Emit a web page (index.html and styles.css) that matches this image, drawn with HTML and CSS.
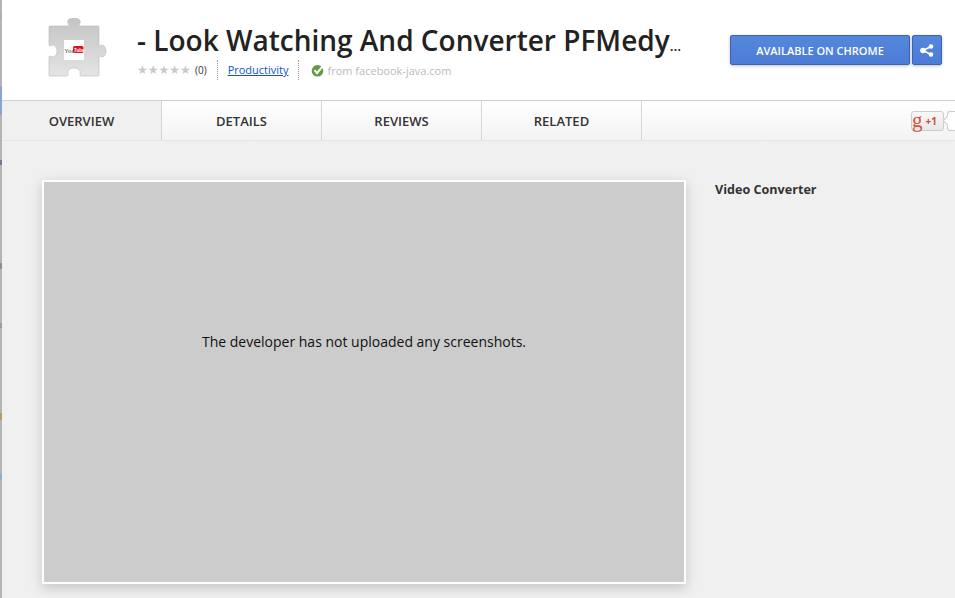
FILE: index.html
```html
<!DOCTYPE html>
<html lang="en">
<head>
    <meta charset="UTF-8">
    <title>Look Watching And Converter PFMedy</title>
    <link rel="stylesheet" href="styles.css">
</head>
<body>
    <div class="edge"></div>
    <div class="page">
        <header class="header">
            <div class="ext-icon">
                <svg width="62" height="60" viewBox="0 0 62 60">
                    <defs>
                        <linearGradient id="puzzle" x1="0" y1="0" x2="0" y2="1">
                            <stop offset="0" stop-color="#c4c4c4"/>
                            <stop offset="1" stop-color="#e4e4e4"/>
                        </linearGradient>
                    </defs>
                    <path d="M4 8 H22 C23 8 23 7 22.5 6 C20 2 24 0 28 0 C32 0 36 2 33.5 6 C33 7 33 8 34 8 H52 Q53 8 53 9 V27 C53 28 54 28 55 27.5 C58 26 60 30 60 33 C60 36 58 40 55 38.5 C54 38 53 38 53 39 V57 Q53 58 52 58 H35 C34 58 34 57 34 56 C35 52 32 50 28 50 C24 50 21 52 22 56 C22 57 22 58 21 58 H4 Q3 58 3 57 V39 C3 38 4 38 5 38.5 C8 40 11 37 11 33 C11 29 8 26 5 27.5 C4 28 3 28 3 27 V9 Q3 8 4 8 Z" fill="url(#puzzle)" stroke="#b8b8b8" stroke-width="0.6"/>
                    <rect x="18" y="22" width="20" height="20" fill="#fff"/>
                    <rect x="27" y="28" width="10.500" height="7" rx="1.500" fill="#d8141c"/>
                    <text x="18.500" y="34.500" class="yt-you">You</text>
                    <text x="28" y="33.500" class="yt-tube">Tube</text>
                </svg>
            </div>
            <div class="info">
                <h1 class="title">- Look Watching And Converter PFMedy<span class="dots">...</span></h1>
                <div class="meta">
                    <span class="stars">★★★★★</span>
                    <span class="count">(0)</span>
                    <a class="category" href="#">Productivity</a>
                    <span class="source">
                        <svg width="14" height="13" viewBox="0 0 14 13">
                            <circle cx="6.500" cy="6.800" r="5.800" fill="#5f9a45"/>
                            <path d="M3.500 6.200 L6 9.200 L12 1.800" fill="none" stroke="#fff" stroke-width="2"/>
                        </svg>
                        from facebook-java.com
                    </span>
                </div>
            </div>
            <div class="actions">
                <button class="btn btn-install">AVAILABLE ON CHROME</button>
                <button class="btn btn-share" aria-label="Share">
                    <svg width="14" height="13" viewBox="0 0 14 13">
                        <path d="M11 2.500 L3 6.500 L11 10.500" fill="none" stroke="#fff" stroke-width="1.600"/>
                        <circle cx="11" cy="2.500" r="2.300" fill="#fff"/>
                        <circle cx="3" cy="6.500" r="2.800" fill="#fff"/>
                        <circle cx="11" cy="10.500" r="2.300" fill="#fff"/>
                    </svg>
                </button>
            </div>
        </header>

        <nav class="tabs">
            <a class="tab active" href="#">OVERVIEW</a>
            <a class="tab" href="#">DETAILS</a>
            <a class="tab" href="#">REVIEWS</a>
            <a class="tab" href="#">RELATED</a>
            <div class="plus-wrap">
                <div class="plus-one"><span class="g">g</span><span class="plus">+1</span></div>
                <div class="bubble"></div>
            </div>
        </nav>

        <main class="content">
            <div class="shot-box">The developer has not uploaded any screenshots.</div>
            <aside class="side">Video Converter</aside>
        </main>
    </div>
</body>
</html>
```

FILE: styles.css
```css
html, body {
    height: 100%;
}

*, *::before, *::after {
    box-sizing: border-box;
}

body {
    font-family: 'Open Sans', sans-serif;
    margin: 0;
    display: flex;
    width: 955px;
    height: 598px;
    overflow: hidden;
    background-color: #f0f0f0;
    color: #222;
}

a {
    color: inherit;
    text-decoration: none;
}

/* sliver of the window behind */
.edge {
    width: 2px;
    flex-shrink: 0;
    background: linear-gradient(#b4b4b4 0, #b4b4b4 10px, #9fb6c6 11px, #c4a98e 18px, #b4b4b4 20px,
        #b4b4b4 86px, #8aa5d0 86px, #8aa5d0 115px, #b4b4b4 115px,
        #b4b4b4 160px, #6c7a92 160px, #6c7a92 165px, #b4b4b4 165px,
        #b4b4b4 263px, #8b8b9a 263px, #8b8b9a 269px, #b4b4b4 269px,
        #b4b4b4 323px, #96a09a 323px, #96a09a 328px, #b4b4b4 328px,
        #b4b4b4 413px, #b89a6a 413px, #b89a6a 420px, #b4b4b4 420px,
        #b4b4b4 474px, #8ab0d8 474px, #8ab0d8 480px, #b4b4b4 480px);
}

.page {
    flex: 1;
    min-width: 0;
    display: flex;
    flex-direction: column;
}

/* top bar */
.header {
    height: 101px;
    flex-shrink: 0;
    display: flex;
    background-color: #fff;
    border-bottom: 1px solid #cfcfcf;
}

.ext-icon {
    width: 135px;
    flex-shrink: 0;
    padding: 18px 0 0 44px;
}

.yt-you {
    font-family: 'Liberation Sans', sans-serif;
    font-size: 6px;
    font-weight: 700;
    fill: #777;
}

.yt-tube {
    font-family: 'Liberation Sans', sans-serif;
    font-size: 4.500px;
    font-weight: 700;
    fill: #fff;
}

.info {
    width: 593px;
    flex-shrink: 0;
    padding-top: 21px;
}

.title {
    margin: 0;
    font-size: 28px;
    font-weight: 600;
    line-height: 38px;
    color: #222;
    white-space: nowrap;
}

.dots {
    font-size: 14px;
    line-height: 0;
}

.meta {
    display: flex;
    align-items: center;
    height: 20px;
    margin-top: 1px;
    font-size: 11px;
}

.stars {
    width: 56px;
    font-family: 'DejaVu Sans', sans-serif;
    font-size: 12px;
    color: #c8c8c8;
    white-space: nowrap;
}

.count {
    font-size: 10px;
    color: #333;
    margin-left: 2px;
    padding-right: 10px;
    border-right: 1px dotted #999;
    line-height: 20px;
}

.category {
    padding: 0 9px 0 10px;
    color: #15c;
    text-decoration: underline;
    border-right: 1px dotted #999;
    line-height: 20px;
}

.source {
    display: flex;
    align-items: center;
    gap: 3px;
    margin-left: 12px;
    color: #bbb;
}

.actions {
    display: flex;
    gap: 2px;
    padding-top: 35px;
}

.btn {
    height: 30px;
    padding: 0;
    border: 1px solid #3a62b8;
    border-radius: 2px;
    color: #fff;
    background: linear-gradient(#5488dc, #4d7bd6);
    box-shadow: 0 1px 3px rgba(0, 0, 0, 0.25);
    font-family: 'Open Sans', sans-serif;
    font-size: 11px;
    font-weight: 600;
}

.btn-install {
    width: 180px;
}

.btn-share {
    width: 30px;
    display: flex;
    align-items: center;
    justify-content: center;
}

/* tabs */
.tabs {
    height: 40px;
    flex-shrink: 0;
    display: flex;
    background: linear-gradient(#fff, #f3f3f3);
    border-bottom: 1px solid #e4e4e4;
}

.tab {
    width: 160px;
    display: flex;
    align-items: center;
    justify-content: center;
    border-right: 1px solid #d5d5d5;
    font-size: 13px;
    font-weight: 600;
    color: #333;
}

.tab.active {
    background: #f0f0f0;
}

.plus-wrap {
    margin-left: auto;
    display: flex;
    align-items: center;
    gap: 3px;
    padding-top: 1px;
}

.plus-one {
    width: 33px;
    height: 20px;
    display: flex;
    align-items: center;
    background: linear-gradient(#f8f8f8, #e8e8e8);
    border: 1px solid #ccc;
    border-radius: 3px;
}

.g {
    font-family: 'Liberation Serif', serif;
    font-size: 21px;
    line-height: 16px;
    color: #d9523a;
    margin: -3px 3px 0 0;
}

.plus {
    font-size: 10px;
    font-weight: 700;
    color: #c4513c;
}

.bubble {
    position: relative;
    width: 8px;
    height: 20px;
    background: #fff;
    border: 1px solid #ccc;
    border-right: 0;
    border-radius: 3px 0 0 3px;
}

.bubble::before {
    content: "";
    position: absolute;
    left: -4px;
    top: 5px;
    width: 7px;
    height: 7px;
    background: #fff;
    border-left: 1px solid #ccc;
    border-bottom: 1px solid #ccc;
    transform: rotate(45deg);
}

/* main area */
.content {
    flex: 1;
    display: flex;
    align-items: flex-start;
    padding: 39px 0 0 40px;
}

.shot-box {
    width: 644px;
    height: 404px;
    flex-shrink: 0;
    display: flex;
    align-items: center;
    justify-content: center;
    padding-bottom: 82px;
    background-color: #ccc;
    border: 2px solid #fff;
    box-shadow: 0 4px 12px rgba(0, 0, 0, 0.18);
    font-size: 14px;
    color: #111;
}

.side {
    margin-left: 29px;
    margin-top: 1px;
    font-size: 12.600px;
    font-weight: 700;
    color: #333;
}
```
